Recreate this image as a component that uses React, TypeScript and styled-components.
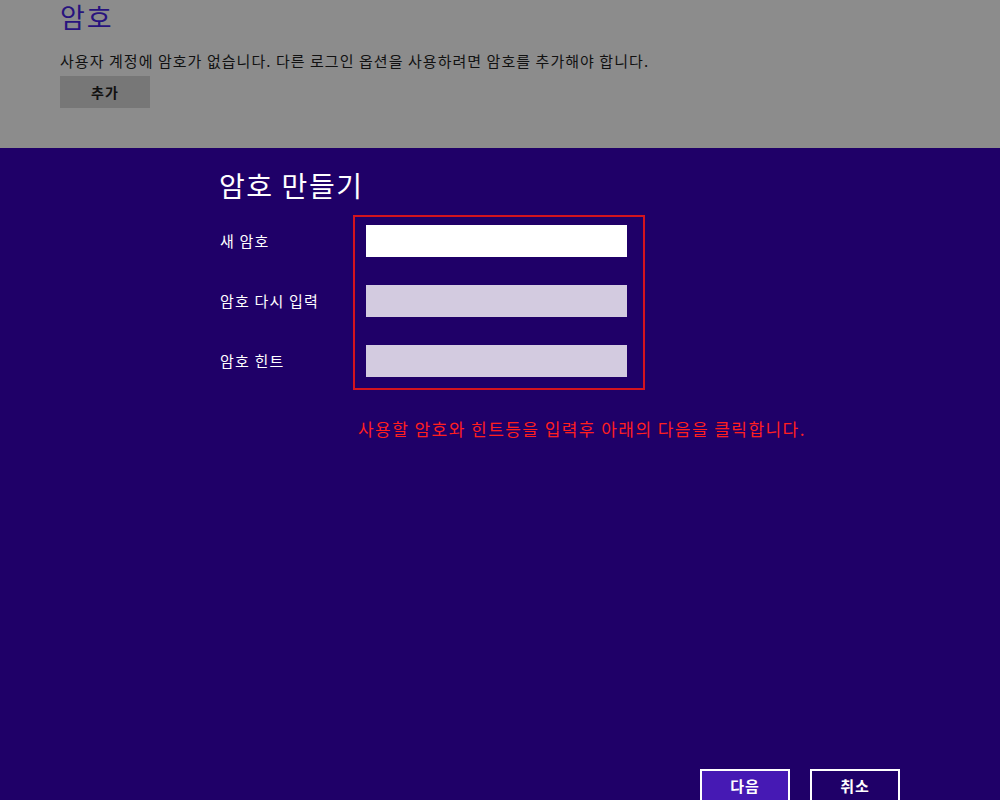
import React from "react";
import styled, { createGlobalStyle } from "styled-components";

const GlobalStyle = createGlobalStyle`
  html, body {
    margin: 0;
    padding: 0;
    width: 1000px;
    height: 800px;
    overflow: hidden;
    font-family: "Noto Sans CJK KR", "Noto Sans", sans-serif;
  }
`;

const Page = styled.div`
  display: flex;
  flex-direction: column;
  width: 1000px;
  height: 800px;
  overflow: hidden;
`;

const AccountPanel = styled.section`
  height: 148px;
  box-sizing: border-box;
  background: #8c8c8c;
  padding: 2px 0 0 60px;
  display: flex;
  flex-direction: column;
  align-items: flex-start;
`;

const PanelTitle = styled.h1`
  margin: 0;
  font-size: 27px;
  font-weight: 400;
  line-height: 30px;
  letter-spacing: 2px;
  color: #28137e;
`;

const PanelText = styled.p`
  margin: 18px 0 0 0;
  font-size: 15px;
  line-height: 22px;
  letter-spacing: 1.05px;
  color: #111;
`;

const GrayButton = styled.button`
  margin-top: 4px;
  width: 90px;
  height: 32px;
  border: none;
  background: #777777;
  color: #111;
  font-family: inherit;
  font-size: 14px;
  font-weight: 700;
  letter-spacing: 1px;
  padding: 0;
`;

const Dialog = styled.section`
  flex: 1;
  background: #1f0068;
  display: flex;
  flex-direction: column;
  padding: 17px 0 0 219px;
  box-sizing: border-box;
`;

const DialogTitle = styled.h2`
  margin: 0;
  font-size: 28px;
  font-weight: 400;
  line-height: 40px;
  letter-spacing: 1.6px;
  color: #ffffff;
`;

const FormRow = styled.div`
  display: flex;
  margin-top: 10px;
`;

const LabelColumn = styled.div`
  width: 134px;
  padding-top: 9px;
  display: flex;
  flex-direction: column;
  gap: 28px;
`;

const Label = styled.label`
  height: 32px;
  display: flex;
  align-items: center;
  padding-left: 1px;
  font-size: 15px;
  letter-spacing: 1.2px;
  color: #ffffff;
`;

const FieldBox = styled.div`
  width: 292px;
  height: 175px;
  box-sizing: border-box;
  border: 2px solid #d4141e;
  padding: 8px 16px 0 11px;
  display: flex;
  flex-direction: column;
  gap: 28px;
`;

const Field = styled.input<{ $active?: boolean }>`
  width: 261px;
  height: 32px;
  box-sizing: border-box;
  border: none;
  outline: none;
  margin: 0;
  background: ${(p) => (p.$active ? "#ffffff" : "#d3cbe0")};
`;

const Hint = styled.p`
  margin: 27px 0 0 139px;
  font-size: 17px;
  line-height: 24px;
  letter-spacing: 1.45px;
  color: #ff1f1f;
`;

const ButtonRow = styled.div`
  margin-top: auto;
  margin-bottom: -6px;
  padding-left: 481px;
  display: flex;
  gap: 20px;
`;

const DialogButton = styled.button<{ $primary?: boolean }>`
  width: 90px;
  height: 37px;
  box-sizing: border-box;
  border: 2px solid #ffffff;
  background: ${(p) => (p.$primary ? "#4619b4" : "transparent")};
  color: #ffffff;
  font-family: inherit;
  font-size: 15px;
  font-weight: 700;
  letter-spacing: 1px;
  padding: 0 0 5px 0;
`;

const fields = [
  { label: "새 암호", active: true },
  { label: "암호 다시 입력", active: false },
  { label: "암호 힌트", active: false },
];

export default function App() {
  return (
    <Page>
      <GlobalStyle />
      <AccountPanel>
        <PanelTitle>암호</PanelTitle>
        <PanelText>
          사용자 계정에 암호가 없습니다. 다른 로그인 옵션을 사용하려면 암호를 추가해야 합니다.
        </PanelText>
        <GrayButton>추가</GrayButton>
      </AccountPanel>
      <Dialog>
        <DialogTitle>암호 만들기</DialogTitle>
        <FormRow>
          <LabelColumn>
            {fields.map((f) => (
              <Label key={f.label}>{f.label}</Label>
            ))}
          </LabelColumn>
          <FieldBox>
            {fields.map((f) => (
              <Field key={f.label} type="password" $active={f.active} />
            ))}
          </FieldBox>
        </FormRow>
        <Hint>사용할 암호와 힌트등을 입력후 아래의 다음을 클릭합니다.</Hint>
        <ButtonRow>
          <DialogButton $primary>다음</DialogButton>
          <DialogButton>취소</DialogButton>
        </ButtonRow>
      </Dialog>
    </Page>
  );
}
